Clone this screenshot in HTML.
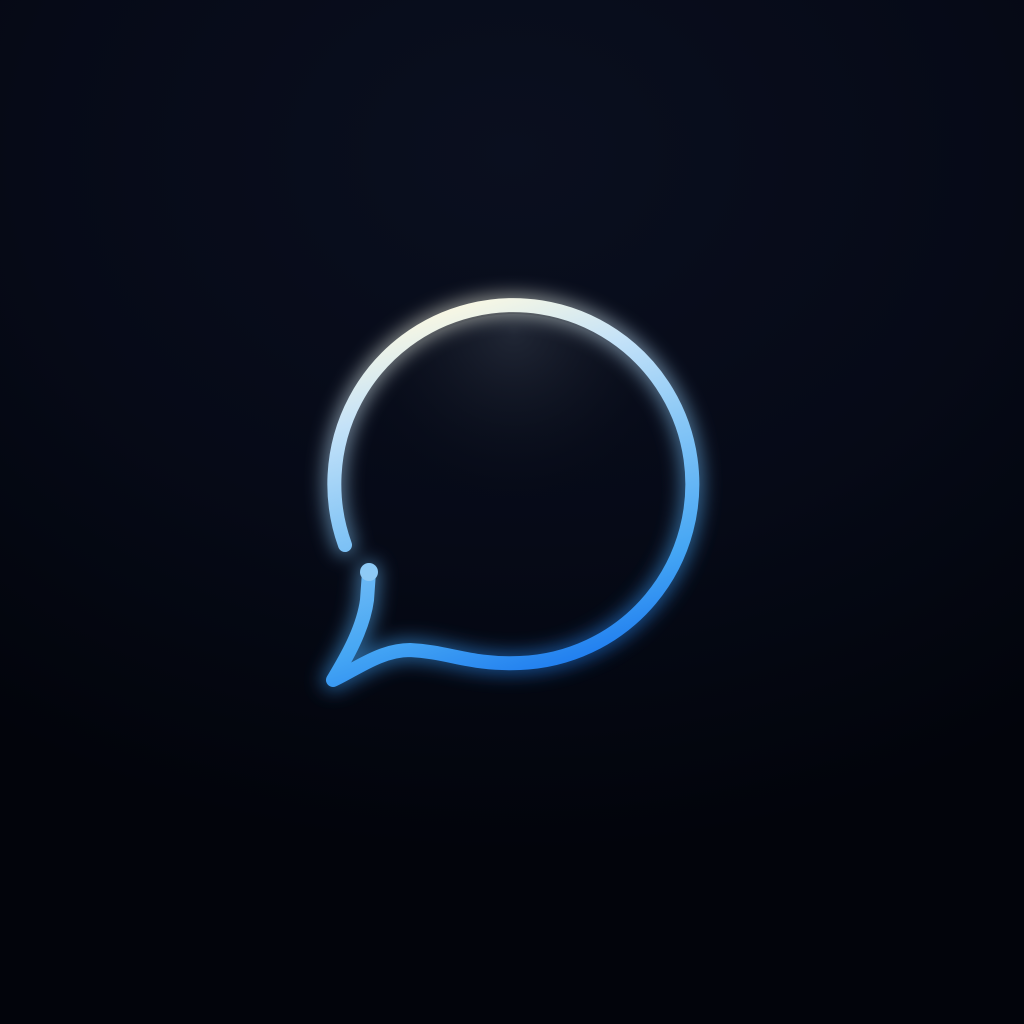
<!DOCTYPE html>
<html><head><style>
html,body{margin:0;padding:0;width:1024px;height:1024px;overflow:hidden;}
body{background:radial-gradient(ellipse 900px 700px at 50% 15%, #0a0f1f 0%, #060a17 55%, #02040b 100%);}
svg{position:absolute;left:0;top:0;}
</style></head><body>
<svg width="1024" height="1024" viewBox="0 0 1024 1024">
<defs>
<linearGradient id="g" gradientUnits="userSpaceOnUse" x1="480" y1="300" x2="600" y2="680">
<stop offset="0" stop-color="#f7f7e4"/>
<stop offset="0.2" stop-color="#c4e2f8"/>
<stop offset="0.45" stop-color="#86c6f6"/>
<stop offset="0.75" stop-color="#45a6f4"/>
<stop offset="1" stop-color="#1572ee"/>
</linearGradient>
<radialGradient id="in" cx="0.5" cy="0.05" r="0.5">
<stop offset="0" stop-color="#3a4250" stop-opacity="0.5"/>
<stop offset="1" stop-color="#0a0e18" stop-opacity="0"/>
</radialGradient>
<filter id="b" x="-30%" y="-30%" width="160%" height="160%"><feGaussianBlur stdDeviation="9"/></filter>
</defs>
<circle cx="514" cy="484" r="170" fill="url(#in)"/>
<g fill="none" stroke="url(#g)" stroke-linecap="round" stroke-linejoin="round">
<path filter="url(#b)" stroke-width="22" opacity="0.55" d="M345,545 A179,179 0 1 1 520,663 C470,665 450,652 410,650 C380,650 355,670 333,680 C345,660 363,630 367,600 L369,572"/>
<path stroke-width="14" d="M345,545 A179,179 0 1 1 520,663 C470,665 450,652 410,650 C380,650 355,670 333,680 C345,660 363,630 367,600 L369,572"/>
</g>
<circle cx="369" cy="572" r="9" fill="#8ecaf6"/>
</svg>
</body></html>
